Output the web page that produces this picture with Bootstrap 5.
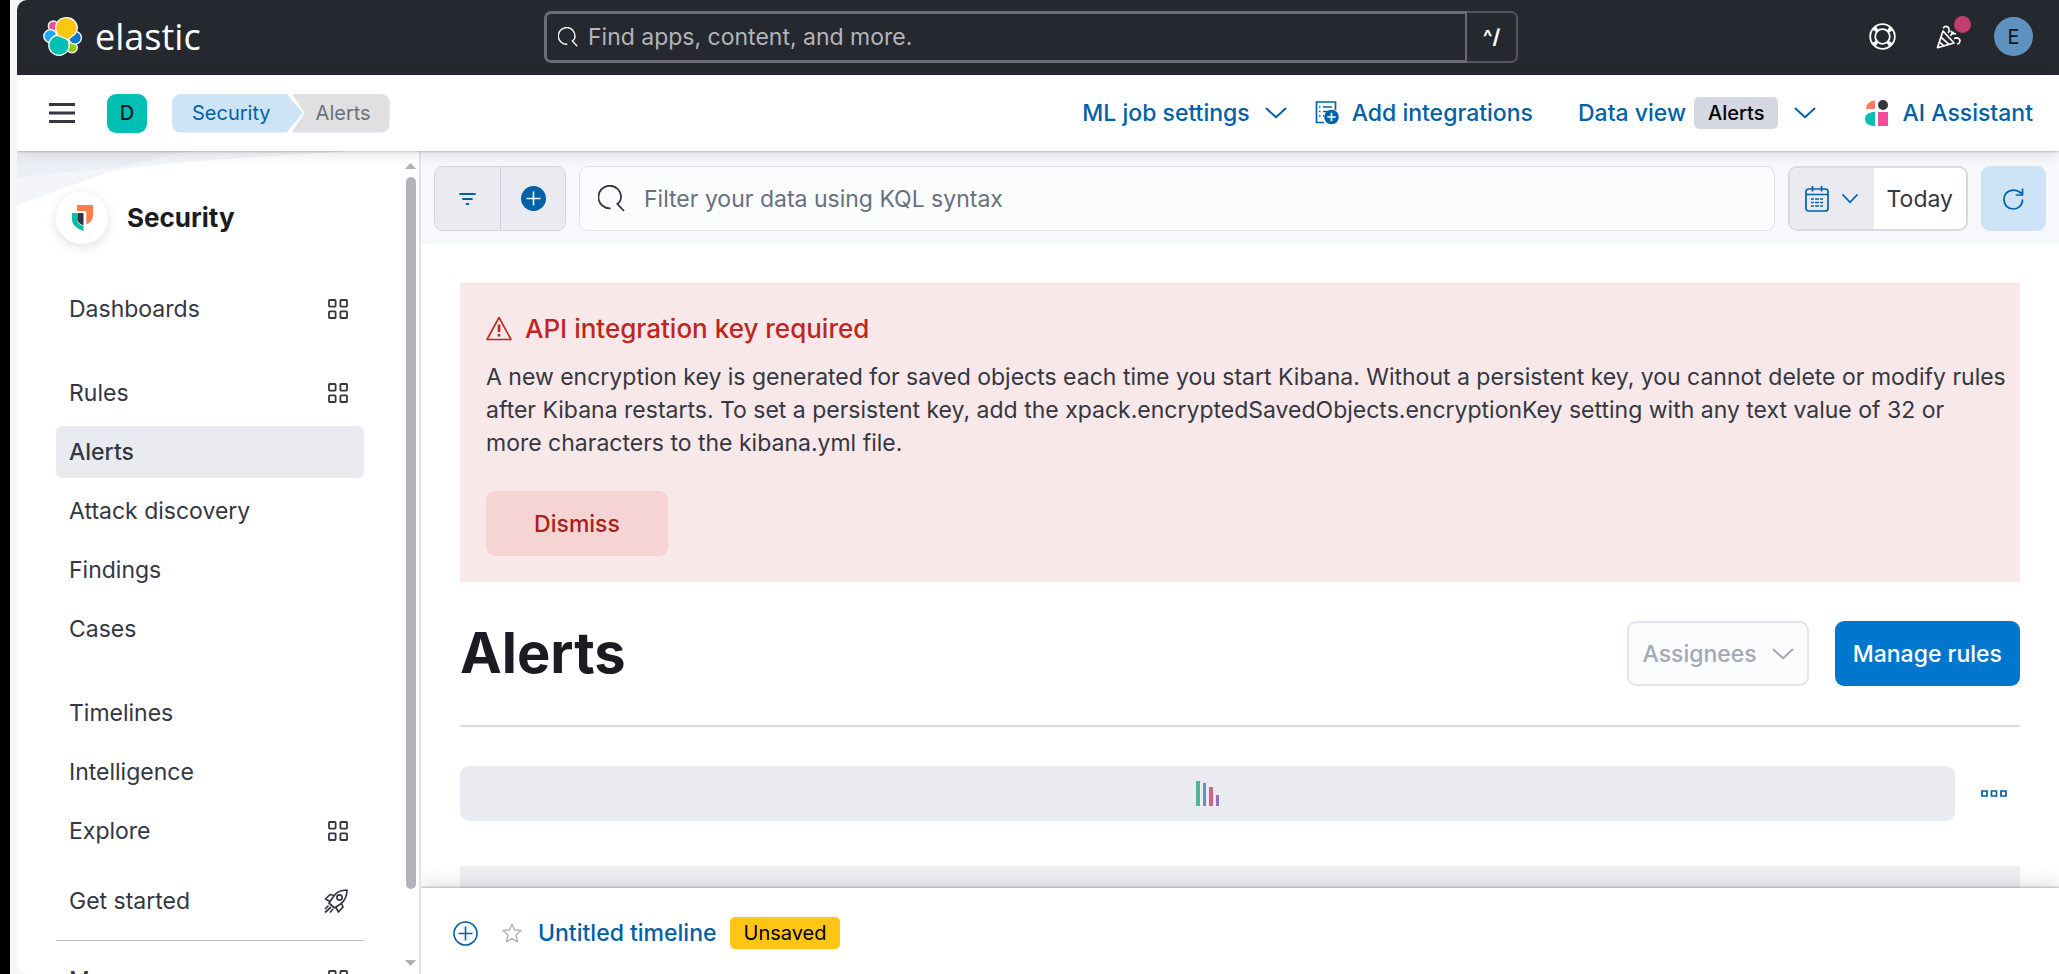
<!DOCTYPE html>
<html lang="en">
<head>
<meta charset="utf-8">
<meta name="viewport" content="width=device-width, initial-scale=1">
<title>Alerts - Security - Elastic</title>
<link href="https://cdn.jsdelivr.net/npm/bootstrap@5.3.0/dist/css/bootstrap.min.css" rel="stylesheet">
<style>
:root{--ink:#343741;--link:#0061a6;--line:#d9dbe3;--shade:#e9ebf1}
body{font-family:Inter,"Liberation Sans",sans-serif;font-size:23px;line-height:32px;color:var(--ink);background:#f6f6f7;border-left:10px solid #000;padding-left:7px}
a{color:inherit;text-decoration:none}
svg{display:block;flex:none}
.app{height:100vh;background:#fff;border-radius:10px 0 0 10px}
.topbar{height:75px;background:#25282f;padding:0 26px 2px}
.brand{width:501px;gap:13px;color:#fff}
.wordmark{font-family:"Open Sans","Noto Sans",sans-serif;font-size:36px;line-height:40px}
.finder{max-width:974px;height:52px;color:#fff}
.finder .field{border:3px solid #6a6c72;border-right-width:2px;border-radius:7px 0 0 7px;padding-left:11px;gap:10px}
.finder .keys{width:51px;border:2px solid #54565c;border-left:0;border-radius:0 7px 7px 0;font-size:20px;font-weight:700}
.plain{border:0;background:none;padding:0;color:inherit}
.field input{border:0;background:none;outline:0;padding:0;color:inherit}
.finder input::placeholder{color:#b2b4ba;opacity:1}
.tools{gap:32px;color:#fff}
.dot{position:absolute;top:-9px;right:-9px;width:17px;height:17px;border-radius:50%;background:#c23f6d}
.avatar{width:39px;height:39px;border-radius:50%;background:#6092c0;color:#101318;font-size:20px}
.subbar{height:76px;padding:0 26px 0 32px;background:#fff;box-shadow:0 1px 2px rgba(0,0,0,.2),0 3px 14px rgba(0,0,0,.1);z-index:3}
.subbar .menu{color:#343741;margin-right:32px}
.space{width:40px;height:39px;border-radius:9px;background:#00bfb3;color:#10201f;font-size:20px;font-weight:500;margin-right:25px}
.crumbs{font-size:20px;line-height:39px}
.crumbs a,.crumbs span{display:block;height:39px}
.crumb-on{background:#cce4f5;color:var(--link);border-radius:9px 0 0 9px;padding:0 32px 0 20px;clip-path:polygon(0 0,calc(100% - 16px) 0,100% 50%,calc(100% - 16px) 100%,0 100%)}
.crumb-off{background:#e0e0e3;color:#69707d;border-radius:0 9px 9px 0;padding:0 19px 0 24px;margin-left:-11px;clip-path:polygon(0 0,100% 0,100% 100%,0 100%,13px 50%)}
.actions{color:var(--link);font-weight:500;gap:45px}
.actions button{font-weight:500}
.actions a{gap:13px}
.actions .jobs{gap:15px;margin-right:-17px}
.pill{background:#d5d8e3;color:#000;font-size:20px;border-radius:5px;line-height:32px;padding:0 14px}
.side{width:404px;border-right:2px solid #e3e4ea;background:#fff}
.side .waves{position:absolute;left:0;top:0}
.side-nav{padding:31px 39px 0;overflow:hidden}
.solution{height:72px;gap:19px;font-size:26px;font-weight:700;color:#1a1c21;margin-bottom:29px}
.puck{width:52px;height:52px;border-radius:50%;background:#fff;box-shadow:0 3px 12px rgba(0,0,0,.12)}
.rows{display:grid;gap:7px;margin-bottom:32px}
.rows.tight{margin-bottom:18px}
.rows a{height:52px;border-radius:6px;padding:0 16px 0 13px}
.rows a.on{background:var(--shade);font-weight:500}
.side hr{margin:13px 0;border-top:1px solid #b9bcc6;opacity:1}
.rail{width:16px;padding:12px 1px 8px 0}
.thumb{width:10px;flex:0 0 712px;border-radius:5px;background:#b3b4ba}
.query{background:#f7f8fc;padding:15px 13px 13px;gap:13px;height:93px}
.pair{width:132px;border:1px solid #cfd3e0;border-radius:9px;background:var(--shade);overflow:hidden}
.pair button+button{border-left:1px solid #cfd3e0!important}
.kql{border:1px solid #e0e2ea;border-radius:9px;background:#fbfcfe;padding-left:18px;gap:19px;color:#343741}
.kql input::placeholder{color:#69707d;opacity:1}
.when{border:2px solid #d8dae3;border-radius:9px;overflow:hidden;background:#fff}
.when .quick{background:var(--shade);width:84px;gap:13px;color:var(--link)}
.when .range{padding:0 13px;color:var(--ink)}
.again{width:65px;border-radius:9px;background:#cce4f5;color:var(--link)}
.page{padding:39px 39px 0}
.notice{background:#f8e8e9;padding:26px 10px 26px 26px;margin-bottom:39px}
.notice h2{font-size:26px;line-height:39px;font-weight:500;color:#bd271e;gap:13px;margin-bottom:13px}
.notice p{line-height:33px;margin-bottom:31px}
.act{height:65px;border-radius:9px;font-weight:500;border:0}
.dismiss{background:#f5d4d3;color:#a8211a;width:182px}
.head{gap:26px;padding-bottom:39px;border-bottom:2px solid #d8dae2;margin-bottom:39px}
.head h1{font-size:56px;line-height:65px;font-weight:700;color:#1a1c21;margin:0}
.people{border:2px solid #e3e5ec;background:#fbfcfe;color:#a4a8b2;padding:0 13px;gap:15px}
.manage{background:#0077cc;color:#fff;padding:0 18px}
.busy{height:55px;border-radius:9px;background:var(--shade)}
.more{padding:0 13px 0 26px}
.chart{height:200px;background:#eff1f5;margin-top:45px}
.dock{height:86px;background:#fff;padding:4px 32px 0;box-shadow:0 -1px 2px rgba(0,0,0,.24),0 -4px 20px rgba(0,0,0,.13);z-index:2;color:var(--link)}
.unsaved{background:#fec514;color:#000;font-size:20px;line-height:32px;border-radius:5px;padding:0 14px;margin-left:13px}
</style>
</head>
<body>
<svg width="0" height="0" class="position-absolute" aria-hidden="true">
  <symbol id="i-apps" viewBox="0 0 20 20"><g fill="none" stroke="currentColor" stroke-width="1.8"><rect x="1" y="1" width="6.6" height="6.6" rx=".8"/><rect x="12.4" y="1" width="6.6" height="6.6" rx=".8"/><rect x="1" y="12.4" width="6.6" height="6.6" rx=".8"/><rect x="12.4" y="12.4" width="6.6" height="6.6" rx=".8"/></g></symbol>
  <symbol id="i-find" viewBox="0 0 27 27"><path d="M12.6 23.3A11.3 11.3 0 1 1 23 12C23 15 21.500 17.500 19.300 18.900L26 26" fill="none" stroke="currentColor" stroke-width="1.8"/></symbol>
  <symbol id="i-down" viewBox="0 0 22 12"><path d="M1.500 1.500L11 10.300L20.500 1.500" fill="none" stroke="currentColor" stroke-width="2" stroke-linecap="round" stroke-linejoin="round"/></symbol>
</svg>
<div class="app d-flex flex-column overflow-hidden">
  <header class="topbar d-flex align-items-center flex-shrink-0">
    <a href="#" class="brand d-flex align-items-center flex-shrink-0">
      <svg width="39" height="39" viewBox="0 0 39 39" stroke="#fff" stroke-width="1.300">
        <circle cx="10.300" cy="9" r="5" fill="#f04e98"/><circle cx="29" cy="30.500" r="5.300" fill="#93c90e"/>
        <circle cx="7.300" cy="19.200" r="6.500" fill="#1ba9f5"/><circle cx="32" cy="20.700" r="6.400" fill="#0077cc"/>
        <circle cx="16" cy="28.200" r="10.200" fill="#00bfb3"/><path d="M13.500 6.500C15.500 2.500 19.500 .7 23.800 .7C29.500 .7 34.300 5.300 34.300 11C34.300 13.500 33.300 15.500 32 17L25 22.500L15 18.500C12.500 15.500 12 10 13.500 6.500Z" fill="#fec514"/>
      </svg>
      <span class="wordmark">elastic</span>
    </a>
    <form class="finder d-flex flex-grow-1" onsubmit="return false">
      <label class="field d-flex align-items-center flex-grow-1">
        <svg width="20" height="20"><use href="#i-find"/></svg>
        <input class="flex-grow-1" type="text" placeholder="Find apps, content, and more." aria-label="Find apps, content, and more.">
      </label>
      <span class="keys d-flex align-items-center justify-content-center">^/</span>
    </form>
    <div class="tools d-flex align-items-center ms-auto flex-shrink-0">
      <button class="plain me-2" aria-label="Help">
        <svg width="27" height="27" viewBox="0 0 27 27" fill="none" stroke="#fff"><circle cx="13.500" cy="13.500" r="12.300" stroke-width="1.800"/><circle cx="13.500" cy="13.500" r="7.300" stroke-width="1.800"/><circle cx="13.500" cy="13.500" r="9.800" stroke-width="5.500" stroke-dasharray="3.800 11.594" stroke-dashoffset="-5.800"/></svg>
      </button>
      <button class="plain position-relative" aria-label="What's new">
        <svg width="26" height="24" viewBox="0 0 28 26" fill="none" stroke="#fff" stroke-width="1.800" stroke-linejoin="round" stroke-linecap="round"><path d="M7.500 6.500L1.500 24.500L19.500 19.500ZM5.500 13.500L14 21M3.800 18.500L8.500 22.500M8 3C9 1 13 .5 14 4C14.500 6 13.500 8 13.500 8M16 11L18.500 8M16.500 7L18 9L21 9.500M20 14.500C23 13 27 15 25.500 18.500C25.200 19.500 24.500 20.500 23.500 20.500"/></svg>
        <span class="dot"></span>
      </button>
      <button class="plain avatar" aria-label="Account">E</button>
    </div>
  </header>

  <div class="subbar d-flex align-items-center flex-shrink-0 position-relative">
    <button class="plain menu" aria-label="Toggle navigation"><svg width="26" height="20" viewBox="0 0 26 20" fill="currentColor"><path d="M0 0H26V3H0ZM0 8.500H26V11.500H0ZM0 17H26V20H0Z"/></svg></button>
    <button class="plain space" aria-label="Default space">D</button>
    <nav class="crumbs d-flex" aria-label="Breadcrumb"><a href="#" class="crumb-on">Security</a><span class="crumb-off" aria-current="page">Alerts</span></nav>
    <div class="actions d-flex align-items-center ms-auto">
      <button class="plain jobs d-flex align-items-center">ML job settings<svg width="22" height="12"><use href="#i-down"/></svg></button>
      <a href="#" class="d-flex align-items-center">
        <svg width="24" height="24" viewBox="0 0 24 24" fill="none" stroke="currentColor" stroke-width="1.700"><path d="M9 21.500H1.500V1H20.500V9M4 6H5.500M8 6H17M4 10.500H5.500M8 10.500H13M4 15H5.500M8 15H9"/><circle cx="16.500" cy="16" r="7.300" fill="currentColor" stroke="none"/><path d="M16.500 11.800V20.200M12.300 16H20.700" stroke="#fff"/></svg>
        Add integrations</a>
      <button class="plain d-flex align-items-center"><span class="me-2">Data view</span><span class="pill me-3">Alerts</span><svg width="22" height="12"><use href="#i-down"/></svg></button>
      <a href="#" class="d-flex align-items-center ms-1">
        <svg width="24" height="26" viewBox="0 0 24 26"><path d="M1 9C1 4 5 .5 10 .5V9Z" fill="#ff7e62"/><circle cx="18" cy="5" r="5" fill="#343741"/><path d="M10 12V26C4 26 0 23.500 0 19S4 12 10 12Z" fill="#00bfb3"/><path d="M13 12H23V26H13Z" fill="#f04e98"/></svg>
        AI Assistant</a>
    </div>
  </div>

  <div class="d-flex flex-grow-1 overflow-hidden">
    <aside class="side d-flex flex-shrink-0 position-relative">
      <svg class="waves" width="388" height="60" viewBox="0 0 388 60" aria-hidden="true"><path d="M0 0H330C250 6 170 9 105 18C80 24 30 44 0 54Z" fill="#f3f5f9"/><path d="M0 0H170L100 17C60 20 30 22 0 27Z" fill="#eceef5"/></svg>
      <nav class="side-nav flex-grow-1 position-relative" aria-label="Security">
        <a href="#" class="solution d-flex align-items-center">
          <span class="puck d-flex align-items-center justify-content-center flex-shrink-0"><svg width="21" height="26" viewBox="0 0 21 26"><path d="M5 0H21V10C21 15 18 18 14.300 19.500V6H5Z" fill="#ff7e50"/><path d="M0 8H5.500V15C5.500 18 8 20 11.500 21V26C5 23.500 0 20 0 14Z" fill="#00bfa5"/><path d="M5.500 9Q6 8 7 8H11.500V20.500C8 19 5.500 17 5.500 14.500Z" fill="#343741"/></svg></span>
          Security</a>
        <div class="rows">
          <a href="#" class="d-flex align-items-center justify-content-between">Dashboards<svg width="20" height="20"><use href="#i-apps"/></svg></a>
        </div>
        <div class="rows">
          <a href="#" class="d-flex align-items-center justify-content-between">Rules<svg width="20" height="20"><use href="#i-apps"/></svg></a>
          <a href="#" class="on d-flex align-items-center">Alerts</a>
          <a href="#" class="d-flex align-items-center">Attack discovery</a>
          <a href="#" class="d-flex align-items-center">Findings</a>
          <a href="#" class="d-flex align-items-center">Cases</a>
        </div>
        <div class="rows tight">
          <a href="#" class="d-flex align-items-center">Timelines</a>
          <a href="#" class="d-flex align-items-center">Intelligence</a>
          <a href="#" class="d-flex align-items-center justify-content-between">Explore<svg width="20" height="20"><use href="#i-apps"/></svg></a>
        </div>
        <div class="rows mb-0">
          <a href="#" class="d-flex align-items-center justify-content-between">Get started<svg width="24" height="24" viewBox="0 0 24 24" fill="none" stroke="currentColor" stroke-width="1.700" stroke-linejoin="round" stroke-linecap="round"><path d="M23 1C17 1 12 3.500 9.500 7.500L5 14L10.500 19L16.500 15C20.500 12 23 7 23 1ZM10 6.500L6 5.500L1.500 10L6 12.500M17.500 14.500L19 18L14.500 23L12 18.500M4 17L1.500 19.500M6.500 18.500L1.500 23M8.500 20.500L6.500 23"/><circle cx="15.500" cy="8.500" r="2.600"/></svg></a>
        </div>
        <hr>
        <div class="rows">
          <a href="#" class="d-flex align-items-center justify-content-between">Manage<svg width="20" height="20"><use href="#i-apps"/></svg></a>
        </div>
      </nav>
      <div class="rail d-flex flex-column align-items-center" aria-hidden="true">
        <svg width="11" height="6" viewBox="0 0 11 6" class="mb-2"><path d="M5.500 0L11 6H0Z" fill="#aeb0b6"/></svg>
        <div class="thumb"></div>
        <svg width="11" height="6" viewBox="0 0 11 6" class="mt-auto"><path d="M0 0H11L5.500 6Z" fill="#aeb0b6"/></svg>
      </div>
    </aside>

    <div class="d-flex flex-column flex-grow-1 overflow-hidden">
      <form class="query d-flex flex-shrink-0" onsubmit="return false">
        <div class="pair d-flex">
          <button class="plain w-50 d-flex align-items-center justify-content-center" aria-label="Saved queries"><svg width="17" height="12" viewBox="0 0 17 12" stroke="#0061a6" stroke-width="1.800" stroke-linecap="round"><path d="M1 1H16M4 6H13M7.500 11H9.500"/></svg></button>
          <button class="plain w-50 d-flex align-items-center justify-content-center" aria-label="Add filter"><svg width="25" height="25" viewBox="0 0 25 25"><circle cx="12.500" cy="12.500" r="12.500" fill="#0061a6"/><path d="M12.500 5.500V19.500M5.500 12.500H19.500" stroke="#fff" stroke-width="1.600"/></svg></button>
        </div>
        <label class="kql field d-flex align-items-center flex-grow-1">
          <svg width="27" height="27"><use href="#i-find"/></svg>
          <input class="flex-grow-1" type="text" placeholder="Filter your data using KQL syntax" aria-label="Filter your data using KQL syntax">
        </label>
        <div class="when d-flex">
          <button class="plain quick d-flex align-items-center justify-content-center" aria-label="Date quick select">
            <svg width="24" height="26" viewBox="0 0 24 26" fill="none" stroke="currentColor" stroke-width="1.700"><rect x="1" y="3" width="22" height="22" rx="2.500"/><path d="M1 8.500H23M7.500 0V5.500M16.500 0V5.500M6 13H18M6 16.500H18M6 20H18" /><path d="M9.500 11V21.500M14.500 11V21.500" stroke="#e9ebf1" stroke-width="1.200"/></svg>
            <svg width="16" height="10" viewBox="0 0 16 10"><path d="M1 1L8 8.300L15 1" fill="none" stroke="currentColor" stroke-width="1.800" stroke-linecap="round"/></svg>
          </button>
          <button class="plain range">Today</button>
        </div>
        <button class="plain again d-flex align-items-center justify-content-center" aria-label="Refresh"><svg width="21" height="22" viewBox="0 0 21 22" fill="none" stroke="currentColor" stroke-width="1.700" stroke-linecap="round"><path d="M19.500 1V7H13.500M18 5C12 -.5 1 2 1 11.500C1 17 5 21 10 21C15 21 19.500 17.500 19.500 12"/></svg></button>
      </form>

      <main class="page flex-grow-1 overflow-hidden">
        <section class="notice" role="alert">
          <h2 class="d-flex align-items-center"><svg width="26" height="25" viewBox="0 0 26 25" fill="none" stroke="currentColor" stroke-width="1.600" stroke-linejoin="round"><path d="M13 1.500L25 23.500H1Z"/><path d="M13 8.500V16M13 18V20.500" stroke-width="2.600"/></svg>API integration key required</h2>
          <p>A new encryption key is generated for saved objects each time you start Kibana. Without a persistent key, you cannot delete or modify rules after Kibana restarts. To set a persistent key, add the xpack.encryptedSavedObjects.encryptionKey setting with any text value of 32 or<br> more characters to the kibana.yml file.</p>
          <button class="act dismiss">Dismiss</button>
        </section>
        <div class="head d-flex align-items-center">
          <h1 class="me-auto">Alerts</h1>
          <button class="act people d-flex align-items-center" disabled>Assignees<svg width="22" height="12"><use href="#i-down"/></svg></button>
          <button class="act manage">Manage rules</button>
        </div>
        <div class="d-flex align-items-center">
          <div class="busy flex-grow-1 d-flex align-items-center justify-content-center" role="status" aria-label="Loading"><svg width="23" height="25" viewBox="0 0 23 25"><path d="M0 0H4V25H0Z" fill="#54b399"/><path d="M7 2H10V25H7Z" fill="#6092c0"/><path d="M13 6H17V25H13Z" fill="#d36086"/><path d="M20 14H23V25H20Z" fill="#9170b8"/></svg></div>
          <button class="plain more" aria-label="More actions"><svg width="26" height="7" viewBox="0 0 26 7" fill="none" stroke="#0061a6" stroke-width="1.700"><path d="M1 1H6V6H1ZM10.500 1H15.500V6H10.500ZM20 1H25V6H20Z"/></svg></button>
        </div>
        <div class="chart"></div>
      </main>

      <footer class="dock d-flex align-items-center flex-shrink-0 position-relative">
        <button class="plain me-4" aria-label="New timeline"><svg width="25" height="25" viewBox="0 0 25 25" fill="none" stroke="currentColor" stroke-width="1.600"><circle cx="12.500" cy="12.500" r="11.500"/><path d="M12.500 5.500V19.500M5.500 12.500H19.500"/></svg></button>
        <button class="plain me-3" aria-label="Add to favorites"><svg width="20" height="20" viewBox="0 0 20 20" fill="none" stroke="#b2b4ba" stroke-width="1.500" stroke-linejoin="round"><path d="M10 1L12.500 7L19 7.500L14 12L15.500 18.800L10 15.500L4.500 18.800L6 12L1 7.500L7.500 7Z"/></svg></button>
        <a href="#" class="fw-medium">Untitled timeline</a>
        <span class="unsaved">Unsaved</span>
      </footer>
    </div>
  </div>
</div>
<script src="https://cdn.jsdelivr.net/npm/bootstrap@5.3.0/dist/js/bootstrap.bundle.min.js"></script>
</body>
</html>
